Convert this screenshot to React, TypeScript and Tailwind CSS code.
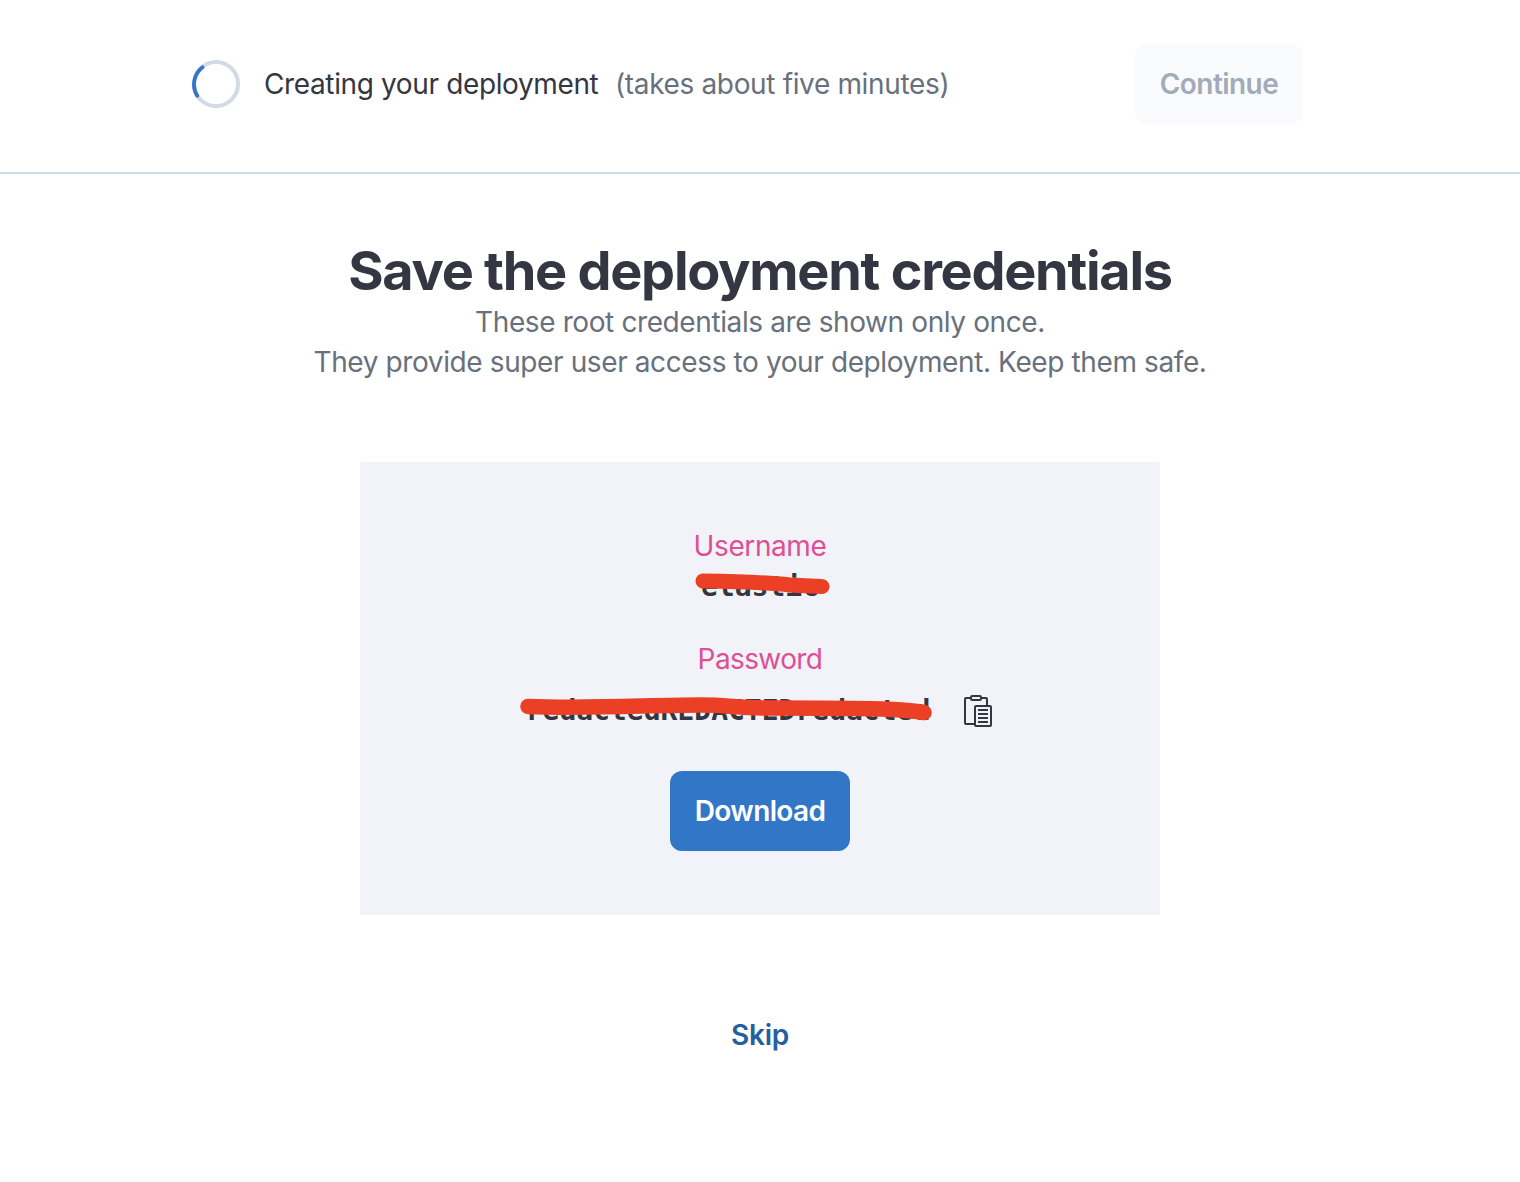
const PLACEHOLDER_PASSWORD = "redactedREDACTEDredacted";

function Spinner() {
  return (
    <svg className="h-12 w-12 shrink-0" viewBox="0 0 48 48" fill="none" strokeWidth="4">
      <circle cx="24" cy="24" r="22" stroke="#D3DAE6" />
      <path d="M10.5 7.2A21.8 21.8 0 0 0 5.2 35.8" stroke="#3276C8" strokeLinecap="round" strokeWidth="3.8" />
    </svg>
  );
}

function ClipboardIcon() {
  return (
    <svg className="h-8 w-8" viewBox="0 0 32 32" fill="none" stroke="#343741" strokeWidth="2">
      <path d="M9 3H4Q3 3 3 4V28Q3 29 4 29H12M19 3H24Q25 3 25 4V10" />
      <rect x="9" y="1" width="10" height="4" rx="1.2" />
      <rect x="13" y="11" width="16" height="20" rx="1" />
      <path d="M16 15H26M16 19H26M16 23H26M16 27H26" />
    </svg>
  );
}

export default function App() {
  return (
    <div className="flex h-[1182px] w-full flex-col bg-white font-['Inter',sans-serif] text-[28px] leading-10 text-[#343741]">
      <header className="flex h-[174px] items-start border-b-2 border-[#D3DAE6] pt-11 pr-[217px] pl-48">
        <div className="flex h-20 items-center whitespace-nowrap">
          <Spinner />
          <span className="ml-6 w-[351px] tracking-[-0.37px]">Creating your deployment</span>
          <span className="tracking-[-0.35px] text-[#69707D]">(takes about five minutes)</span>
        </div>
        <button className="ml-auto h-20 w-[168px] rounded-xl bg-[#FAFBFD] font-semibold tracking-[-0.55px] text-[#A2ABBA]">
          Continue
        </button>
      </header>

      <main className="flex flex-col items-center">
        <h1 className="mt-[65px] h-16 text-[54px] leading-16 font-bold tracking-[-1.27px] whitespace-nowrap">
          Save the deployment credentials
        </h1>
        <p className="-mt-px text-center tracking-[-0.39px] whitespace-nowrap text-[#69707D]">
          These root credentials are shown only once.
          <br />
          They provide super user access to your deployment. Keep them safe.
        </p>

        <section className="mt-20 flex h-[453px] w-[800px] flex-col items-center bg-[#F2F3F9] pt-16 text-center">
          <div className="tracking-[-0.4px] text-[#DD5095]">Username</div>
          <div className="relative mt-px h-10 font-['DejaVu_Sans_Mono',monospace] font-bold">
            elastic
            <svg className="absolute top-[5px] left-[-6px]" width="136" height="24" viewBox="0 0 136 24" fill="none">
              <path d="M8 9Q70 10 95 13L127 14.5" stroke="#EB4026" strokeWidth="15" strokeLinecap="round" />
            </svg>
          </div>

          <div className="mt-8 tracking-[-0.6px] text-[#DD5095]">Password</div>
          <div className="mt-2 flex h-12 items-center">
            <div className="relative font-['DejaVu_Sans_Mono',monospace] font-bold">
              {PLACEHOLDER_PASSWORD}
              <svg className="absolute top-[5px] left-[-6px]" width="414" height="28" viewBox="0 0 414 28" fill="none">
                <path
                  d="M8 10.5C70 13 130 9 180 9C210 9 215 12 250 12C300 12 350 12 373 13.5Q391 14.5 404 16.5"
                  stroke="#EB4026"
                  strokeWidth="15.5"
                  strokeLinecap="round"
                />
              </svg>
            </div>
            <button className="ml-8" aria-label="Copy password">
              <ClipboardIcon />
            </button>
          </div>

          <button className="mt-9 h-20 w-[180px] rounded-xl bg-[#3276C8] font-semibold tracking-[-0.65px] text-white">
            Download
          </button>
        </section>

        <a className="mt-[100px] font-semibold tracking-[-0.3px] text-[#265F9E]">Skip</a>
      </main>
    </div>
  );
}
